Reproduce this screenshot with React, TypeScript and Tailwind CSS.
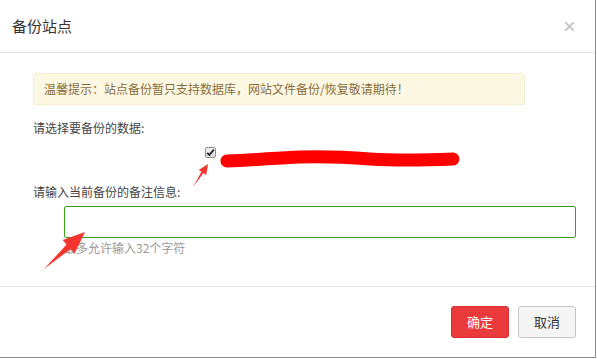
import { X } from 'lucide-react'

const font = { fontFamily: '"Noto Sans CJK SC", "Noto Sans", sans-serif' }

function Annotations() {
  return (
    <svg className="pointer-events-none absolute left-0 top-0" width="597" height="359" viewBox="0 0 597 359">
      <path
        d="M227 161 C 255 160, 275 158, 300 157 C 325 156, 345 157, 370 159 C 400 161, 430 160, 453 159"
        stroke="#ff0000"
        strokeWidth="13"
        strokeLinecap="round"
        fill="none"
      />
      <polygon points="193,187 203.5,173.1 206.3,174.9 208,164 198.7,169.9 201.5,171.7" fill="#f2352f" />
      <polygon points="44,269 70.6,249 74.6,253.5 85,232 62.6,240.1 66.6,244.6" fill="#f2352f" />
    </svg>
  )
}

export default function App() {
  return (
    <div className="relative h-[359px] w-[597px] bg-white" style={font}>
      <div className="flex h-[358px] w-[596px] flex-col border-b border-r border-[#8a8a8a]">
        <header className="flex h-[53px] shrink-0 items-center justify-between border-b border-[#e5e5e5] pl-[12px] pr-[18px]">
          <h1 className="text-[15px] font-normal text-[#333]">备份站点</h1>
          <X size={15} strokeWidth={3} className="text-[#c8c8c8]" />
        </header>

        <div className="flex-1 pl-[33px] pr-[20px] pt-[20px]">
          <div className="flex h-[32px] w-[492px] items-center rounded-[3px] border border-[#faebcc] bg-[#fcf8e3] pl-[10px] text-[12px] text-[#8a6d3b]">
            温馨提示：站点备份暂只支持数据库，网站文件备份/恢复敬请期待！
          </div>

          <p className="mt-[14px] text-[12px] leading-[18px] text-[#444]">请选择要备份的数据:</p>

          <div className="mt-[9px] flex h-[12px] items-center pl-[172px]">
            <span className="flex h-[11px] w-[11px] items-center justify-center rounded-[2px] border border-[#8f8f8f] bg-gradient-to-b from-[#f4f4f4] to-[#dcdcdc]">
              <svg width="9" height="9" viewBox="0 0 9 9">
                <path d="M1.2 4.8 L3.4 7 L7.8 1.6" stroke="#222" strokeWidth="1.8" fill="none" />
              </svg>
            </span>
          </div>

          <p className="mt-[25px] text-[12px] leading-[18px] text-[#444]">请输入当前备份的备注信息:</p>

          <div className="ml-[31px] mt-[5px] h-[32px] w-[512px] rounded-[2px] border border-[#36a117] bg-white" />

          <p className="ml-[31px] mt-[1px] text-[12px] leading-[18px] text-[#999]">最多允许输入32个字符</p>
        </div>

        <footer className="flex h-[71px] shrink-0 items-start justify-end gap-[9px] border-t border-[#e5e5e5] pr-[19px] pt-[19px]">
          <button className="h-[32px] w-[58px] rounded-[3px] border border-[#d9302f] bg-[#ea3a3b] text-[13px] text-white">确定</button>
          <button className="h-[32px] w-[58px] rounded-[3px] border border-[#c6c6c6] bg-[#f5f5f5] text-[13px] text-[#333]">取消</button>
        </footer>
      </div>
      <Annotations />
    </div>
  )
}
